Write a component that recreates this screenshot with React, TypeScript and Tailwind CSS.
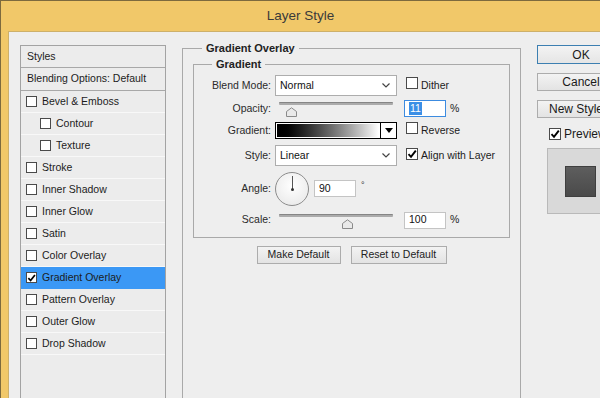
import React from "react";

type Item = { label: string; sub?: boolean; checked?: boolean; active?: boolean };

const items: Item[] = [
  { label: "Bevel & Emboss" },
  { label: "Contour", sub: true },
  { label: "Texture", sub: true },
  { label: "Stroke" },
  { label: "Inner Shadow" },
  { label: "Inner Glow" },
  { label: "Satin" },
  { label: "Color Overlay" },
  { label: "Gradient Overlay", checked: true, active: true },
  { label: "Pattern Overlay" },
  { label: "Outer Glow" },
  { label: "Drop Shadow" },
];

function Check({ checked, size = 12 }: { checked?: boolean; size?: number }) {
  return (
    <span
      className="inline-flex shrink-0 items-center justify-center border border-[#4a4a4a] bg-white"
      style={{ width: size, height: size }}
    >
      {checked && (
        <svg width="10" height="10" viewBox="0 0 10 10">
          <path d="M1.5 5.2 L4 7.8 L8.8 1.6" fill="none" stroke="#000" strokeWidth="1.9" />
        </svg>
      )}
    </span>
  );
}

function Select({ value }: { value: string }) {
  return (
    <div className="flex h-[21px] w-[122px] shrink-0 items-center justify-between border border-[#adadad] bg-white pl-[4px] pr-[6px] text-[#111]">
      <span>{value}</span>
      <svg width="8" height="5" viewBox="0 0 8 5">
        <polyline points="0.5,0.5 4,4 7.5,0.5" fill="none" stroke="#444" strokeWidth="1.2" />
      </svg>
    </div>
  );
}

function Slider({ thumb }: { thumb: number }) {
  return (
    <div className="relative h-[19px] w-[122px] shrink-0 px-[4px]">
      <div className="mt-[6px] h-[3px] w-full rounded-[1px] border-t border-[#858585] bg-[#ababab]" />
      <svg
        className="absolute top-[5px]"
        style={{ left: thumb - 5 }}
        width="11"
        height="10"
        viewBox="0 0 11 10"
      >
        <path d="M0.5 9.5 V4.5 L5.5 0.8 L10.5 4.5 V9.5 Z" fill="#e9e9e9" stroke="#8a8a8a" />
      </svg>
    </div>
  );
}

function Field({ children, focused }: { children: React.ReactNode; focused?: boolean }) {
  return (
    <div
      className={
        "flex h-[17px] w-[42px] shrink-0 items-center bg-white pl-[4px] text-[#111] " +
        (focused ? "border border-[#3c8be0]" : "border border-[#c4c4c4]")
      }
    >
      {children}
    </div>
  );
}

function Label({ children }: { children: React.ReactNode }) {
  return <div className="w-[77px] shrink-0 text-right text-[#2a2a2a]">{children}</div>;
}

function PushButton({ children, w }: { children: React.ReactNode; w: string }) {
  return (
    <div
      className={
        "flex h-[18px] items-center justify-center border border-[#acacac] bg-gradient-to-b from-[#f3f3f3] to-[#e3e3e3] text-[#222] " +
        w
      }
    >
      {children}
    </div>
  );
}

export default function App() {
  return (
    <div className="flex h-[398px] w-[600px] flex-col overflow-hidden border-l border-t border-[#7d6a3e] bg-[#f1c869] font-['Liberation_Sans',Arial,sans-serif] text-[10.5px]">
      {/* title bar */}
      <div className="flex h-[30px] shrink-0 items-center justify-center text-[13.5px] text-[#3a3a3a]">
        Layer Style
      </div>

      <div className="flex min-h-0 flex-1">
        <div className="w-[7px] shrink-0" />
        <div className="flex min-w-0 flex-1 items-start overflow-hidden border-l border-t border-[#cdb06a] bg-[#eeeeee]">
          {/* styles list */}
          <div className="ml-[11px] mt-[13px] h-[400px] w-[146px] shrink-0 border border-[#a3a3a3] bg-[#ececec] text-[#1c1c1c]">
            <div className="flex h-[22px] items-center border-b border-[#a8a8a8] pl-[6px]">Styles</div>
            <div className="flex h-[23px] items-center border-b border-[#a8a8a8] pl-[6px]">
              Blending Options: Default
            </div>
            {items.map((it) => (
              <div
                key={it.label}
                className={
                  "flex h-[22px] items-center border-b " +
                  (it.active ? "border-[#3b98f5] bg-[#3b98f5]" : "border-[#f8f8f8]") +
                  (it.sub ? " pl-[19px]" : " pl-[5px]")
                }
              >
                <Check checked={it.checked} size={11} />
                <span className="ml-[5px]">{it.label}</span>
              </div>
            ))}
          </div>

          {/* gradient overlay group */}
          <fieldset className="ml-[16px] mt-[9px] h-[400px] w-[339px] shrink-0 border border-[#a9a9a9]">
            <legend className="ml-[19px] px-[4px] text-[11px] font-bold leading-[14px] text-[#222]">
              Gradient Overlay
            </legend>
            <fieldset className="ml-[10px] mt-[2px] w-[317px] border border-[#a9a9a9] pb-[8px] pt-[4px]">
              <legend className="ml-[18px] px-[4px] text-[11px] font-bold leading-[14px] text-[#222]">
                Gradient
              </legend>

              <div className="flex h-[21px] items-center">
                <Label>Blend Mode:</Label>
                <div className="ml-[4px]">
                  <Select value="Normal" />
                </div>
                <div className="ml-[9px]">
                  <Check />
                </div>
                <span className="ml-[3px] text-[#1c1c1c]">Dither</span>
              </div>

              <div className="mt-[3px] flex h-[19px] items-center">
                <Label>Opacity:</Label>
                <div className="ml-[4px]">
                  <Slider thumb={16} />
                </div>
                <div className="ml-[7px]">
                  <Field focused>
                    <span className="bg-[#3b8fe6] px-[1px] leading-[13px] text-white">11</span>
                  </Field>
                </div>
                <span className="ml-[4px] text-[#222]">%</span>
              </div>

              <div className="mt-[4px] flex h-[17px] items-center">
                <Label>Gradient:</Label>
                <div className="ml-[4px] flex h-[17px] w-[122px] shrink-0 border border-black bg-white">
                  <div className="m-[1px] flex-1 bg-gradient-to-r from-black to-white" />
                  <div className="flex w-[16px] items-center justify-center border-l border-black">
                    <svg width="8" height="5" viewBox="0 0 8 5">
                      <path d="M0 0 H8 L4 5 Z" fill="#000" />
                    </svg>
                  </div>
                </div>
                <div className="ml-[9px]">
                  <Check />
                </div>
                <span className="ml-[3px] text-[#1c1c1c]">Reverse</span>
              </div>

              <div className="mt-[6px] flex h-[21px] items-center">
                <Label>Style:</Label>
                <div className="ml-[4px]">
                  <Select value="Linear" />
                </div>
                <div className="ml-[9px]">
                  <Check checked />
                </div>
                <span className="ml-[3px] text-[#1c1c1c]">Align with Layer</span>
              </div>

              <div className="mt-[5px] flex h-[35px] items-center">
                <Label>Angle:</Label>
                <div className="ml-[4px] flex h-[34px] w-[34px] shrink-0 flex-col items-center rounded-full border border-[#8c8c8c] bg-[radial-gradient(circle_at_50%_40%,#ffffff,#e6e6e6)]">
                  <div className="mt-[3px] h-[13px] w-[1px] bg-[#555]" />
                  <div className="-mt-[1px] h-[3px] w-[3px] rounded-full bg-[#333]" />
                </div>
                <div className="ml-[5px]">
                  <Field>90</Field>
                </div>
                <span className="mb-[5px] ml-[5px] text-[9px] text-[#333]">°</span>
              </div>

              <div className="mt-[5px] flex h-[18px] items-center">
                <Label>Scale:</Label>
                <div className="ml-[4px]">
                  <Slider thumb={72} />
                </div>
                <div className="ml-[7px]">
                  <Field>100</Field>
                </div>
                <span className="ml-[4px] text-[#222]">%</span>
              </div>
            </fieldset>

            <div className="mt-[8px] flex justify-center gap-[10px]">
              <PushButton w="w-[84px]">Make Default</PushButton>
              <PushButton w="w-[96px]">Reset to Default</PushButton>
            </div>
          </fieldset>

          {/* right column */}
          <div className="ml-[16px] mt-[13px] flex w-[88px] shrink-0 flex-col text-[12px] text-[#1a1a1a]">
            <div className="flex h-[19px] items-center justify-center border border-[#3c7fb1] bg-gradient-to-b from-[#f3f3f3] to-[#e5e5e5]">
              OK
            </div>
            <div className="mt-[9px] flex h-[18px] items-center justify-center border border-[#acacac] bg-gradient-to-b from-[#f3f3f3] to-[#e3e3e3]">
              Cancel
            </div>
            <div className="mt-[9px] flex h-[18px] items-center justify-center border border-[#acacac] bg-gradient-to-b from-[#f3f3f3] to-[#e3e3e3]">
              New Style...
            </div>
            <div className="mt-[9px] flex h-[14px] items-center pl-[12px]">
              <Check checked />
              <span className="ml-[3px]">Preview</span>
            </div>
            <div className="ml-[10px] mt-[7px] h-[66px] w-[82px] shrink-0 border border-[#b9b9b9] bg-[#d9d9d9] pl-[17px] pt-[17px]">
              <div className="h-[31px] w-[31px] border border-[#3f3f3f] bg-gradient-to-b from-[#5e5e5e] to-[#4a4a4a]" />
            </div>
          </div>
        </div>
      </div>
    </div>
  );
}
